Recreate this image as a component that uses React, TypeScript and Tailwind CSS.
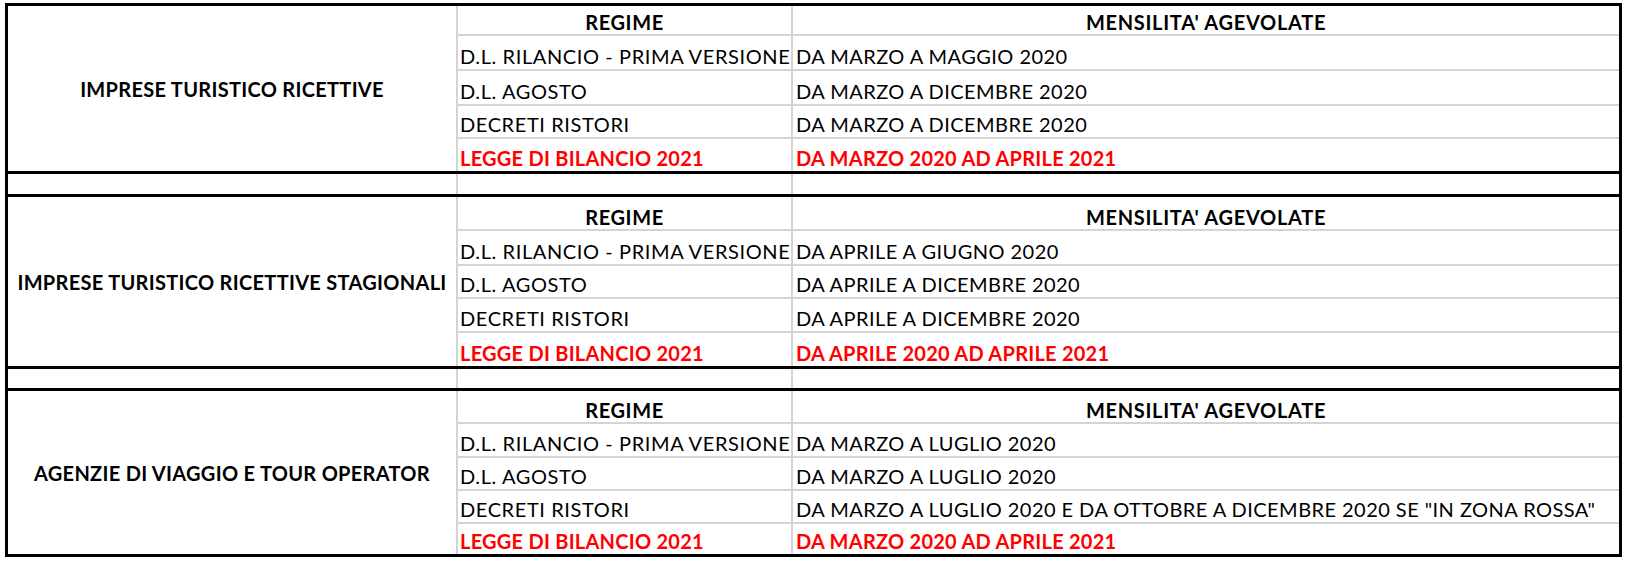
import React from "react";

type Section = {
  label: string;
  rows: [string, string][];
  heights: string[];
};

const sections: Section[] = [
  {
    label: "IMPRESE TURISTICO RICETTIVE",
    rows: [
      ["D.L. RILANCIO - PRIMA VERSIONE", "DA MARZO A MAGGIO 2020"],
      ["D.L. AGOSTO", "DA MARZO A DICEMBRE 2020"],
      ["DECRETI RISTORI", "DA MARZO A DICEMBRE 2020"],
      ["LEGGE DI BILANCIO 2021", "DA MARZO 2020 AD APRILE 2021"],
    ],
    heights: ["h-[30px]", "h-[35px]", "h-[35px]", "h-[33px]", "h-[32px]"],
  },
  {
    label: "IMPRESE TURISTICO RICETTIVE STAGIONALI",
    rows: [
      ["D.L. RILANCIO - PRIMA VERSIONE", "DA APRILE A GIUGNO 2020"],
      ["D.L. AGOSTO", "DA APRILE A DICEMBRE 2020"],
      ["DECRETI RISTORI", "DA APRILE A DICEMBRE 2020"],
      ["LEGGE DI BILANCIO 2021", "DA APRILE 2020 AD APRILE 2021"],
    ],
    heights: ["h-[34px]", "h-[35px]", "h-[33px]", "h-[34px]", "h-[33px]"],
  },
  {
    label: "AGENZIE DI VIAGGIO E TOUR OPERATOR",
    rows: [
      ["D.L. RILANCIO - PRIMA VERSIONE", "DA MARZO A LUGLIO 2020"],
      ["D.L. AGOSTO", "DA MARZO A LUGLIO 2020"],
      [
        "DECRETI RISTORI",
        'DA MARZO A LUGLIO 2020 E DA OTTOBRE A DICEMBRE 2020 SE "IN ZONA ROSSA"',
      ],
      ["LEGGE DI BILANCIO 2021", "DA MARZO 2020 AD APRILE 2021"],
    ],
    heights: ["h-[33px]", "h-[34px]", "h-[33px]", "h-[33px]", "h-[30px]"],
  },
];

function SectionBlock({ s }: { s: Section }) {
  return (
    <div className="flex">
      <div className="w-[450px] shrink-0 flex items-center justify-center border-r-2 border-[#d4d4d4] font-bold tracking-[0.3px]">
        {s.label}
      </div>
      <div className="flex-1 flex flex-col">
        <div className={`flex ${s.heights[0]} border-b-2 border-[#d4d4d4]`}>
          <div className="w-[335px] shrink-0 border-r-2 border-[#d4d4d4] flex items-end justify-center pb-[2px] font-bold tracking-[0.6px]">
            REGIME
          </div>
          <div className="flex-1 flex items-end justify-center pb-[2px] font-bold tracking-[0.7px]">
            MENSILITA' AGEVOLATE
          </div>
        </div>
        {s.rows.map((r, i) => {
          const last = i === s.rows.length - 1;
          return (
            <div
              key={i}
              className={`flex ${s.heights[i + 1]} ${
                last ? "" : "border-b-2 border-[#d4d4d4]"
              } ${last ? "text-[#ff0000] font-bold" : "text-black"}`}
            >
              <div
                className={`w-[335px] shrink-0 border-r-2 border-[#d4d4d4] flex items-end pl-[2px] pb-[3px] whitespace-nowrap overflow-visible ${
                  last ? "tracking-[0.25px]" : "tracking-[0.6px]"
                }`}
              >
                {r[0]}
              </div>
              <div
                className={`flex-1 flex items-end pl-[3px] pb-[3px] whitespace-nowrap ${
                  last ? "tracking-[0.25px]" : "tracking-[0.45px]"
                }`}
              >
                {r[1]}
              </div>
            </div>
          );
        })}
      </div>
    </div>
  );
}

function EmptyRow({ h }: { h: string }) {
  return (
    <div className={`flex ${h} border-y-[3px] border-black`}>
      <div className="w-[450px] shrink-0 border-r-2 border-[#d4d4d4]" />
      <div className="w-[335px] shrink-0 border-r-2 border-[#d4d4d4]" />
      <div className="flex-1" />
    </div>
  );
}

export default function App() {
  return (
    <div className="w-[1628px] h-[563px] bg-white overflow-hidden">
      <div
        className="ml-[5px] mt-[3px] w-[1617px] border-[3px] border-black text-[20px] leading-none text-black"
        style={{ fontFamily: "Lato, 'Open Sans', sans-serif" }}
      >
        <SectionBlock s={sections[0]} />
        <EmptyRow h="h-[26px]" />
        <SectionBlock s={sections[1]} />
        <EmptyRow h="h-[25px]" />
        <SectionBlock s={sections[2]} />
      </div>
    </div>
  );
}
